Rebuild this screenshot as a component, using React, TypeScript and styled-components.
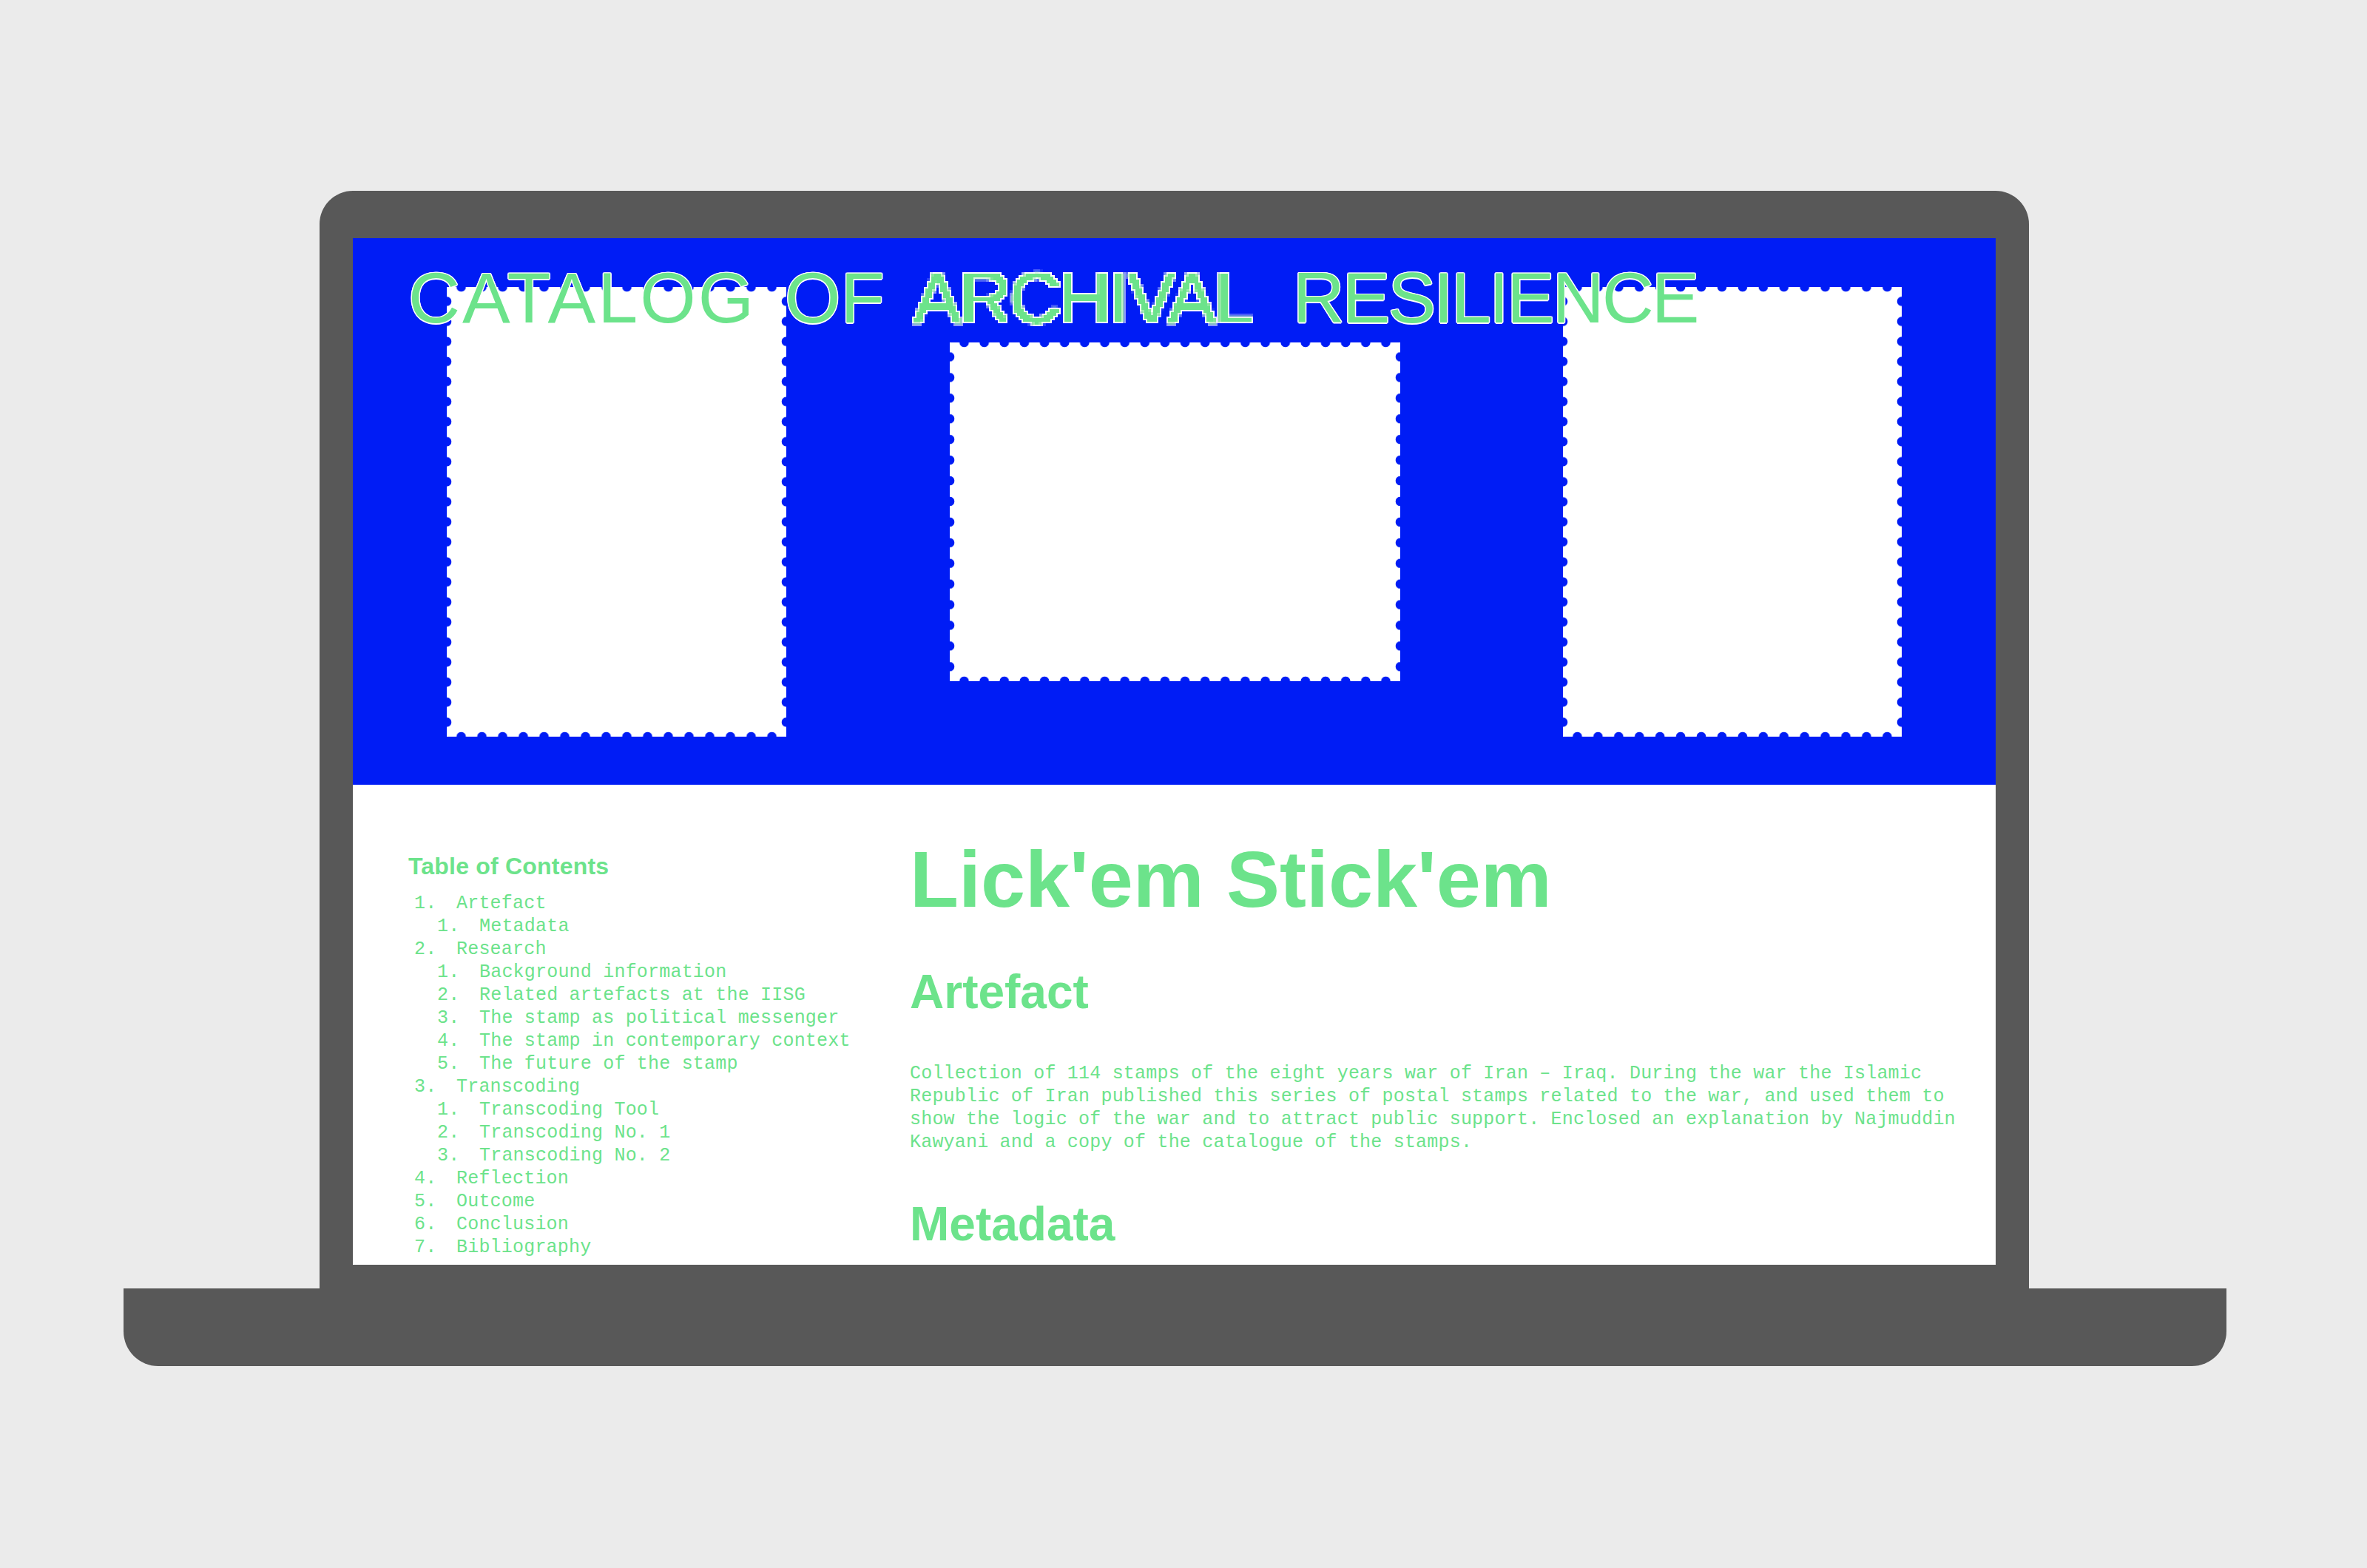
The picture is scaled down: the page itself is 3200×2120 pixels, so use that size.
import React from "react";
import styled, { createGlobalStyle } from "styled-components";

const BLUE = "#001cf5";
const GREEN = "#6ce38b";
const CASE = "#585858";
const SANS = `"Liberation Sans", Arial, sans-serif`;
const MONO = `"Liberation Mono", "Courier New", monospace`;

const GlobalStyle = createGlobalStyle`
  html, body {
    margin: 0;
    padding: 0;
    background: #ebebeb;
  }
  body {
    font-family: ${SANS};
  }
`;

const Page = styled.div`
  width: 3200px;
  min-height: 2120px;
  box-sizing: border-box;
  padding: 258px 0 0 167px;
  display: flex;
  flex-direction: column;
  align-items: flex-start;
`;

const Defs = styled.svg`
  display: block;
  width: 0;
  height: 0;
  overflow: hidden;
`;

const Laptop = styled.div`
  display: flex;
  flex-direction: column;
  align-items: flex-start;
`;

const Lid = styled.div`
  margin-left: 265px;
  width: 2311px;
  box-sizing: border-box;
  padding: 64px 45px 32px;
  background: ${CASE};
  border-radius: 45px 45px 0 0;
`;

const Base = styled.div`
  width: 2843px;
  height: 105px;
  background: ${CASE};
  border-radius: 0 0 47px 47px;
`;

const Screen = styled.div`
  width: 2221px;
  height: 1388px;
  overflow: hidden;
  background: #fff;
  display: flex;
  flex-direction: column;
`;

const Hero = styled.header`
  position: relative;
  flex: none;
  height: 739px;
  box-sizing: border-box;
  padding: 0 127px;
  background: ${BLUE};
  display: flex;
  align-items: center;
  justify-content: space-between;
`;

const SiteTitle = styled.div`
  position: absolute;
  top: 32px;
  left: 75px;
  z-index: 1;
  margin: 0;
  font-family: ${SANS};
  font-weight: 400;
  font-size: 97px;
  line-height: 97px;
  word-spacing: 12px;
  white-space: nowrap;
  color: ${GREEN};
  text-shadow: 1.5px 0 #fff, -1.5px 0 #fff, 0 1.5px #fff, 0 -1.5px #fff,
    1px 1px #fff, -1px -1px #fff, 1px -1px #fff, -1px 1px #fff;
`;

const TitleWord = styled.span<{ $track: number }>`
  letter-spacing: ${(p) => p.$track}px;
`;

const PixelWord = styled.span<{ $track: number }>`
  display: inline-block;
  margin-right: 16px;
  letter-spacing: ${(p) => p.$track}px;
  text-shadow: none;
  filter: url(#pixelate);
`;

const period = (len: number) => {
  const n = Math.max(1, Math.round((len - 39) / 27.5));
  return (len - 39) / n;
};

const dot = `radial-gradient(circle 7px at 50% 50%, ${BLUE} 5.9px, transparent 6.7px)`;

const Stamp = styled.div<{ $w: number; $h: number }>`
  flex: none;
  width: ${(p) => p.$w}px;
  height: ${(p) => p.$h}px;
  background: ${({ $w, $h }) => {
    const px = period($w);
    const py = period($h);
    const ox = 19.5 - px / 2;
    const oy = 19.5 - py / 2;
    return [
      `${dot} ${ox}px -7px / ${px}px 14px repeat-x`,
      `${dot} ${ox}px ${$h - 7}px / ${px}px 14px repeat-x`,
      `${dot} -7px ${oy}px / 14px ${py}px repeat-y`,
      `${dot} ${$w - 7}px ${oy}px / 14px ${py}px repeat-y`,
      `#fff`,
    ].join(", ");
  }};
`;

const Main = styled.main`
  flex: 1;
  display: grid;
  grid-template-columns: 678px 1450px;
  align-items: start;
  padding: 68px 0 0 75px;
`;

const Toc = styled.nav`
  padding-top: 24px;
`;

const TocTitle = styled.h3`
  margin: 0 0 17px;
  font-family: ${SANS};
  font-weight: 700;
  font-size: 32px;
  line-height: 36px;
  letter-spacing: 0.2px;
  color: ${GREEN};
`;

const TocList = styled.ol`
  list-style: none;
  margin: 0;
  padding: 0;
  font-family: ${MONO};
  font-size: 25px;
  line-height: 31px;
  letter-spacing: 0.2px;
  color: ${GREEN};
`;

const TocItem = styled.li<{ $nested?: boolean }>`
  display: flex;
  padding-left: ${(p) => (p.$nested ? 39 : 8)}px;
  white-space: nowrap;
`;

const TocNum = styled.span`
  flex: none;
  width: 57px;
`;

const Article = styled.article`
  color: ${GREEN};
`;

const PageTitle = styled.h1`
  margin: 0 0 58px;
  font-family: ${SANS};
  font-weight: 700;
  font-size: 108px;
  line-height: 119px;
`;

const SectionTitle = styled.h2`
  margin: 0 0 60px;
  font-family: ${SANS};
  font-weight: 700;
  font-size: 64px;
  line-height: 70px;
`;

const Para = styled.p`
  margin: 0 0 60px;
  font-family: ${MONO};
  font-size: 25px;
  line-height: 31px;
  letter-spacing: 0.2px;
`;

const toc: { n: number; label: string; nested?: boolean }[] = [
  { n: 1, label: "Artefact" },
  { n: 1, label: "Metadata", nested: true },
  { n: 2, label: "Research" },
  { n: 1, label: "Background information", nested: true },
  { n: 2, label: "Related artefacts at the IISG", nested: true },
  { n: 3, label: "The stamp as political messenger", nested: true },
  { n: 4, label: "The stamp in contemporary context", nested: true },
  { n: 5, label: "The future of the stamp", nested: true },
  { n: 3, label: "Transcoding" },
  { n: 1, label: "Transcoding Tool", nested: true },
  { n: 2, label: "Transcoding No. 1", nested: true },
  { n: 3, label: "Transcoding No. 2", nested: true },
  { n: 4, label: "Reflection" },
  { n: 5, label: "Outcome" },
  { n: 6, label: "Conclusion" },
  { n: 7, label: "Bibliography" },
];

export default function App() {
  return (
    <>
      <GlobalStyle />
      <Page>
        <Defs aria-hidden="true">
          <filter id="pixelate" x="-10%" y="-20%" width="120%" height="140%">
            <feFlood x="2" y="2" width="1" height="1" floodColor="#000" />
            <feComposite width="4" height="4" />
            <feTile result="grid" />
            <feComposite in="SourceGraphic" in2="grid" operator="in" />
            <feMorphology operator="dilate" radius="2" result="px" />
            <feMorphology in="px" operator="dilate" radius="1.5" result="outline" />
            <feFlood floodColor="#ffffff" />
            <feComposite in2="outline" operator="in" result="white" />
            <feMerge>
              <feMergeNode in="white" />
              <feMergeNode in="px" />
            </feMerge>
          </filter>
        </Defs>
        <Laptop>
          <Lid>
            <Screen>
              <Hero>
                <SiteTitle>
                  <TitleWord $track={3}>CATALOG</TitleWord> <TitleWord $track={0}>OF</TitleWord>{" "}
                  <PixelWord $track={-2.5}>ARCHIVAL</PixelWord>{" "}
                  <TitleWord $track={-3}>RESILIENCE</TitleWord>
                </SiteTitle>
                <Stamp $w={459} $h={608} />
                <Stamp $w={609} $h={458} />
                <Stamp $w={458} $h={608} />
              </Hero>
              <Main>
                <Toc>
                  <TocTitle>Table of Contents</TocTitle>
                  <TocList>
                    {toc.map((t, i) => (
                      <TocItem key={i} $nested={t.nested}>
                        <TocNum>{t.n}.</TocNum>
                        {t.label}
                      </TocItem>
                    ))}
                  </TocList>
                </Toc>
                <Article>
                  <PageTitle>Lick'em Stick'em</PageTitle>
                  <SectionTitle>Artefact</SectionTitle>
                  <Para>
                    Collection of 114 stamps of the eight years war of Iran – Iraq. During the war the
                    Islamic Republic of Iran published this series of postal stamps related to the war,
                    and used them to show the logic of the war and to attract public support. Enclosed
                    an explanation by Najmuddin Kawyani and a copy of the catalogue of the stamps.
                  </Para>
                  <SectionTitle>Metadata</SectionTitle>
                </Article>
              </Main>
            </Screen>
          </Lid>
          <Base />
        </Laptop>
      </Page>
    </>
  );
}
